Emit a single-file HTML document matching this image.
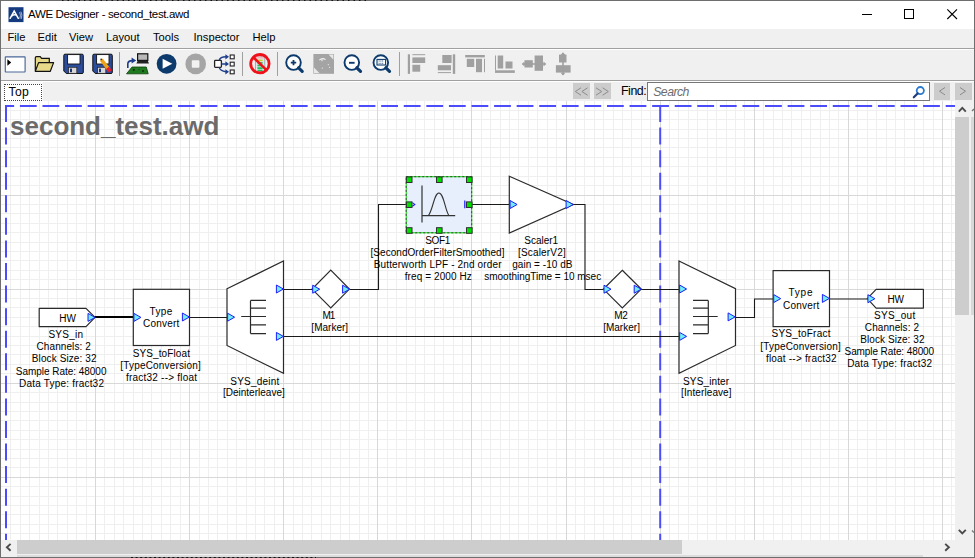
<!DOCTYPE html>
<html><head><meta charset="utf-8">
<style>
*{margin:0;padding:0;box-sizing:border-box}
html,body{width:975px;height:558px;overflow:hidden;background:#f0f0f0}
body{position:relative;font-family:"Liberation Sans",sans-serif;color:#000}
.a{position:absolute}
.t{position:absolute;white-space:nowrap;line-height:1}
.m{position:absolute;white-space:nowrap;line-height:1;top:32px;font-size:11.2px}
.sep{position:absolute;top:52px;width:1px;height:24px;background:#a0a0a0}
</style></head><body>
<!-- title bar -->
<div class="a" style="left:1px;top:1px;width:973px;height:28px;background:#fff"></div>
<svg class="a" style="left:8px;top:6.5px" width="16" height="16" viewBox="0 0 16 16">
<rect x="0.5" y="0.2" width="15" height="14.9" fill="#143a80"/>
<path d="M2.1 11.3L6.2 4.1L10.3 11.3M3.5 9.2Q5 7.6 7.6 7.9" stroke="#fff" stroke-width="1.5" fill="none" stroke-linecap="round"/>
<path d="M11.6 5.2Q13.2 8 11.8 11.6M12.9 4.6Q14.8 8 13.1 12" stroke="#b8c0d8" stroke-width="0.9" fill="none"/>
</svg>
<div class="t" style="left:28px;top:9px;font-size:11.5px;letter-spacing:-0.35px">AWE Designer - second_test.awd</div>
<div class="a" style="left:862px;top:14px;width:10px;height:1px;background:#000"></div>
<div class="a" style="left:904px;top:9px;width:10px;height:10px;border:1px solid #000"></div>
<svg class="a" style="left:946px;top:8px" width="12" height="12" viewBox="0 0 12 12"><path d="M1.3 1.3 L11 11 M11 1.3 L1.3 11" stroke="#000" stroke-width="1.1"/></svg>

<!-- menu -->
<div class="m" style="left:7.5px">File</div>
<div class="m" style="left:37.5px">Edit</div>
<div class="m" style="left:69px">View</div>
<div class="m" style="left:106px">Layout</div>
<div class="m" style="left:153px">Tools</div>
<div class="m" style="left:193.5px">Inspector</div>
<div class="m" style="left:252.5px">Help</div>
<div class="a" style="left:1px;top:48px;width:973px;height:1px;background:#a0a0a0"></div>
<div class="a" style="left:1px;top:49px;width:973px;height:1px;background:#fff"></div>

<!-- toolbar -->
<svg class="a" style="left:0;top:49px" width="600" height="31" viewBox="0 49 600 31">
<!-- console -->
<rect x="5.3" y="56.8" width="19.8" height="15.2" rx="0.4" fill="#fff" stroke="#4a6698" stroke-width="1.15"/>
<path d="M7.4 59.2L11.2 62.5L7.4 65.8Z" fill="#000"/>
<!-- folder -->
<path d="M35.3 70.8V57.8Q35.3 56.6 36.5 56.6H40.2L41.6 58.3H49.3V62.3" fill="#e6d889" stroke="#111" stroke-width="1.2"/>
<path d="M35.3 71.3L38.6 62.6H53.6L50.3 71.3Z" fill="#e6d98a" stroke="#111" stroke-width="1.2" stroke-linejoin="round"/>
<!-- save -->
<path d="M63.8 55.4Q63.8 54.2 65 54.2H82.1Q83.3 54.2 83.3 55.4V72.3Q83.3 73.5 82.1 73.5H66.3L63.8 71Z" fill="#2c4d9c" stroke="#111" stroke-width="1"/>
<rect x="67.6" y="54.6" width="12.4" height="9.4" fill="#fff" stroke="#111" stroke-width="0.9"/>
<rect x="68.6" y="67.3" width="8.2" height="6" fill="#d8d8d8" stroke="#222" stroke-width="0.7"/>
<rect x="70" y="68.6" width="2" height="3.6" fill="#1c3370"/>
<!-- save as -->
<path d="M92.8 55.4Q92.8 54.2 94 54.2H111.1Q112.3 54.2 112.3 55.4V72.3Q112.3 73.5 111.1 73.5H95.3L92.8 71Z" fill="#2c4d9c" stroke="#111" stroke-width="1"/>
<rect x="96.6" y="54.6" width="12.4" height="9.4" fill="#fff" stroke="#111" stroke-width="0.9"/>
<rect x="97.6" y="67.3" width="8.2" height="6" fill="#d8d8d8" stroke="#222" stroke-width="0.7"/>
<rect x="99" y="68.6" width="2" height="3.6" fill="#1c3370"/>
<path d="M101.3 59.6L108.8 69.4" stroke="#eea21a" stroke-width="3.6" stroke-linecap="butt"/>
<path d="M107.6 67.8L110.3 71.4" stroke="#ee1c2a" stroke-width="3.6"/>
<circle cx="101.2" cy="59.3" r="0.9" fill="#333"/>
<!-- sep -->
<rect x="119" y="52" width="1" height="24" fill="#a0a0a0"/>
<!-- board -->
<path d="M126.5 73.8L132 67H146.3L148.2 73.8Z" fill="#1f7a1f" stroke="#0b3d0b" stroke-width="0.8"/>
<circle cx="133.8" cy="69.8" r="1.1" fill="#0a2a0a"/><circle cx="143" cy="71" r="0.9" fill="#0a2a0a"/><circle cx="139" cy="69.3" r="0.5" fill="#0a2a0a"/>
<rect x="137.6" y="53.8" width="10.2" height="6.6" fill="#b8b8b8" stroke="#111" stroke-width="1.2"/>
<path d="M136.4 63.6L137.8 60.4H147.6L149 63.6Z" fill="#222"/>
<path d="M127.8 68V64Q127.8 60.6 132.5 60.6" stroke="#1b3c8c" stroke-width="1.6" fill="none"/>
<path d="M131.6 57.6L136.2 60.6L131.6 63.6Z" fill="#1b3c8c"/>
<!-- play -->
<circle cx="166.6" cy="63.8" r="9.9" fill="#0c3a6c"/>
<path d="M162.6 58.8L172.3 63.8L162.6 68.8Z" fill="#fff"/>
<!-- stop -->
<circle cx="195.7" cy="63.9" r="10.3" fill="#a5a5a5"/>
<rect x="191.8" y="60.2" width="7.6" height="7.6" rx="0.8" fill="#f2f2f2"/>
<!-- tree -->
<rect x="214.6" y="60.4" width="6.8" height="7" rx="0.8" fill="#fff" stroke="#222" stroke-width="1.3"/>
<path d="M221.4 63.9H226.4M219.2 60.4Q220.2 56.9 226 56.8M219.2 67.4Q220.2 70.9 226 71.8" stroke="#1f3f8f" stroke-width="1.5" fill="none"/>
<path d="M225.4 54.2L229 56.8L225.4 59.4ZM225.4 61.3L229 63.9L225.4 66.5ZM225.4 69.2L229 71.8L225.4 74.4Z" fill="#1f3f8f"/>
<rect x="230.2" y="55" width="4" height="3.8" fill="#fff" stroke="#222" stroke-width="1.1"/>
<rect x="230.2" y="62.2" width="4" height="3.8" fill="#fff" stroke="#222" stroke-width="1.1"/>
<rect x="230.2" y="70" width="4" height="3.8" fill="#fff" stroke="#222" stroke-width="1.1"/>
<rect x="242" y="52" width="1" height="24" fill="#a0a0a0"/>
<!-- no battery -->
<rect x="255.4" y="56.8" width="9.4" height="14.6" fill="#e4e8ec" stroke="#9aa0a8" stroke-width="0.9"/>
<rect x="256.2" y="56.6" width="7.8" height="2" fill="#f4b8c0"/>
<rect x="257.4" y="59.6" width="5.2" height="1.6" fill="#c8d020"/>
<rect x="257.4" y="62" width="5.2" height="1.8" fill="#20c060"/><rect x="257.4" y="64.6" width="5.2" height="1.8" fill="#20c060"/><rect x="257.4" y="67.2" width="5.2" height="1.8" fill="#20c060"/><rect x="257.4" y="69.6" width="5.2" height="1.4" fill="#20c060"/>
<circle cx="259.9" cy="63.7" r="9.2" fill="none" stroke="#f01018" stroke-width="2.8"/>
<path d="M253.3 57.3L266.5 70.1" stroke="#f01018" stroke-width="2.6"/>
<rect x="277" y="52" width="1" height="24" fill="#a0a0a0"/>
<!-- zoom in -->
<circle cx="293.5" cy="62.6" r="7.3" fill="#fff" stroke="#0c3a6c" stroke-width="1.9"/>
<path d="M298.6 67.8L302.2 71.3" stroke="#0c3a6c" stroke-width="3.2" stroke-linecap="round"/>
<path d="M293.5 59.9V65.3M290.8 62.6H296.2" stroke="#0c3a6c" stroke-width="1.8"/>
<!-- fit gray -->
<rect x="313.4" y="54" width="20.6" height="19.8" fill="#a4a4a4"/>
<path d="M328.6 54.6H333.4V59.8Z" fill="#e8e8e8"/>
<path d="M314 67.4V73.2H319.6Z" fill="#e8e8e8"/>
<path d="M319.4 60.2Q322 57.4 325.6 59.6M322 59V61.3" stroke="#f0f0f0" stroke-width="1.1" fill="none"/>
<circle cx="328.3" cy="64.6" r="0.6" fill="#eee"/><circle cx="329.6" cy="67.3" r="0.6" fill="#eee"/><circle cx="322.3" cy="68.1" r="0.6" fill="#eee"/>
<!-- zoom out -->
<circle cx="351.8" cy="62.6" r="7.3" fill="#fff" stroke="#0c3a6c" stroke-width="1.9"/>
<path d="M356.9 67.8L360.5 71.3" stroke="#0c3a6c" stroke-width="3.2" stroke-linecap="round"/>
<path d="M349 62.8H354.6" stroke="#0c3a6c" stroke-width="1.9"/>
<!-- zoom fit -->
<circle cx="380.8" cy="62.6" r="7.3" fill="#fff" stroke="#0c3a6c" stroke-width="1.9"/>
<path d="M385.9 67.8L389.5 71.3" stroke="#0c3a6c" stroke-width="3.2" stroke-linecap="round"/>
<rect x="377" y="59.4" width="8.6" height="5.6" fill="#fff" stroke="#0c3a6c" stroke-width="1.1"/>
<path d="M378.6 61H384M378.6 63.3H384" stroke="#0c3a6c" stroke-width="0.9" stroke-dasharray="1 0.8"/>
<rect x="399" y="52" width="1" height="24" fill="#a0a0a0"/>
<!-- align left -->
<g fill="#a0a0a0">
<rect x="407.8" y="54.3" width="2.2" height="19.6"/>
<rect x="412.4" y="57.4" width="12.8" height="5.6"/>
<rect x="412.4" y="64.8" width="7.8" height="6.9"/>
<rect x="412.4" y="54.2" width="12.8" height="1"/>
<!-- align right -->
<rect x="452.8" y="54.3" width="2.4" height="19.6"/>
<rect x="442.3" y="55" width="9.3" height="8"/>
<rect x="437.8" y="65.2" width="13.2" height="5.1"/>
<rect x="437.8" y="72.1" width="13.2" height="1"/>
<!-- align top -->
<rect x="465.2" y="55" width="19.6" height="2.4"/>
<rect x="466.8" y="58.8" width="7.4" height="8.2"/>
<rect x="476" y="58.8" width="6" height="13.4"/>
<rect x="484" y="58.8" width="1" height="13.4"/>
<!-- align bottom -->
<rect x="495" y="55.5" width="1" height="14.8"/>
<rect x="497.7" y="55.5" width="5.5" height="13"/>
<rect x="505.5" y="61.5" width="7" height="7"/>
<rect x="495" y="70.3" width="19.8" height="2.6"/>
<!-- center h -->
<rect x="524.5" y="60.2" width="8.3" height="7.3"/>
<rect x="534.6" y="55.5" width="8.4" height="15.3"/>
<rect x="522.5" y="63.2" width="23" height="1.6"/>
<path d="M521.8 64L524.5 61.4V66.6ZM546.2 64L543.5 61.4V66.6Z"/>
<!-- center v -->
<rect x="559" y="54.6" width="7.5" height="7.9"/>
<rect x="555.9" y="65.2" width="14.7" height="7.4"/>
<rect x="562.2" y="53" width="1.6" height="22"/>
<path d="M563 52.2L560.6 55H565.4ZM563 75.6L560.6 72.8H565.4Z"/>
</g>
</svg>


<div class="a" style="left:1px;top:80px;width:973px;height:1px;background:#a0a0a0"></div>
<div class="a" style="left:1px;top:81px;width:973px;height:1px;background:#fff"></div>

<!-- tab bar -->
<div class="a" style="left:1px;top:82px;width:42px;height:19px;background:#fafafa"></div>
<div class="a" style="left:4px;top:84px;width:38px;height:17px;background:#fff;border:1px dotted #444"></div>
<div class="t" style="left:8.6px;top:85.6px;font-size:12.2px;letter-spacing:0.3px">Top</div>
<div class="a" style="left:573px;top:83px;width:17px;height:16px;background:#cccccc"></div>
<div class="a" style="left:594px;top:83px;width:17px;height:16px;background:#cccccc"></div>
<div class="t" style="left:621px;top:85px;font-size:12.4px;letter-spacing:-0.45px">Find:</div>
<div class="a" style="left:647px;top:82px;width:283px;height:19px;background:#fff;border:1px solid #777"></div>
<div class="t" style="left:653.2px;top:86.1px;font-size:12.3px;letter-spacing:-0.55px;font-style:italic;color:#6d6d6d">Search</div>
<svg class="a" style="left:910px;top:84px" width="16" height="16" viewBox="910 84 16 16">
<circle cx="920.3" cy="90.6" r="3.6" fill="none" stroke="#2a7ad0" stroke-width="1.8"/>
<path d="M917.6 93.4L913.8 97.3" stroke="#1d3f7a" stroke-width="2.2" stroke-linecap="round"/>
</svg>
<div class="a" style="left:934px;top:83px;width:16px;height:16.5px;background:#cccccc"></div>
<div class="a" style="left:954.5px;top:83px;width:17px;height:16.5px;background:#cccccc"></div>
<svg class="a" style="left:934px;top:83px" width="40" height="17" viewBox="934 83 40 17">
<path d="M945 87.5L939.5 91.2L945 94.9" stroke="#8a8a8a" stroke-width="1" fill="none"/>
<path d="M960 87.5L965.5 91.2L960 94.9" stroke="#8a8a8a" stroke-width="1" fill="none"/>
</svg>
<svg class="a" style="left:570px;top:82px" width="45" height="18" viewBox="570 82 45 18">
<path d="M581 87.8L575.3 91.5L581 95.2M587.6 87.8L581.9 91.5L587.6 95.2M596 87.8L601.7 91.5L596 95.2M602.6 87.8L608.3 91.5L602.6 95.2" stroke="#8c8c8c" stroke-width="1" fill="none"/>
</svg>


<!-- canvas -->
<svg class="a" style="left:1px;top:101px" width="954" height="439" viewBox="1 101 954 439" font-family="Liberation Sans, sans-serif" fill="#000"><rect x="1" y="101" width="954" height="439" fill="#fff"/>
<path d="M10.5 101V540M20.5 101V540M29.5 101V540M39.5 101V540M48.5 101V540M57.5 101V540M67.5 101V540M76.5 101V540M86.5 101V540M104.5 101V540M114.5 101V540M123.5 101V540M133.5 101V540M142.5 101V540M151.5 101V540M161.5 101V540M170.5 101V540M180.5 101V540M199.5 101V540M208.5 101V540M217.5 101V540M227.5 101V540M236.5 101V540M246.5 101V540M255.5 101V540M264.5 101V540M274.5 101V540M293.5 101V540M302.5 101V540M311.5 101V540M321.5 101V540M330.5 101V540M340.5 101V540M349.5 101V540M359.5 101V540M368.5 101V540M387.5 101V540M396.5 101V540M406.5 101V540M415.5 101V540M424.5 101V540M434.5 101V540M443.5 101V540M453.5 101V540M462.5 101V540M481.5 101V540M490.5 101V540M500.5 101V540M509.5 101V540M518.5 101V540M528.5 101V540M537.5 101V540M547.5 101V540M556.5 101V540M575.5 101V540M584.5 101V540M594.5 101V540M603.5 101V540M613.5 101V540M622.5 101V540M631.5 101V540M641.5 101V540M650.5 101V540M669.5 101V540M678.5 101V540M688.5 101V540M697.5 101V540M707.5 101V540M716.5 101V540M726.5 101V540M735.5 101V540M744.5 101V540M763.5 101V540M773.5 101V540M782.5 101V540M791.5 101V540M801.5 101V540M810.5 101V540M820.5 101V540M829.5 101V540M838.5 101V540M857.5 101V540M867.5 101V540M876.5 101V540M886.5 101V540M895.5 101V540M904.5 101V540M914.5 101V540M923.5 101V540M933.5 101V540M951.5 101V540M1 110.5H955M1 119.5H955M1 129.5H955M1 138.5H955M1 147.5H955M1 157.5H955M1 166.5H955M1 176.5H955M1 185.5H955M1 204.5H955M1 213.5H955M1 223.5H955M1 232.5H955M1 242.5H955M1 251.5H955M1 260.5H955M1 270.5H955M1 279.5H955M1 298.5H955M1 307.5H955M1 317.5H955M1 326.5H955M1 336.5H955M1 345.5H955M1 354.5H955M1 364.5H955M1 373.5H955M1 392.5H955M1 402.5H955M1 411.5H955M1 420.5H955M1 430.5H955M1 439.5H955M1 449.5H955M1 458.5H955M1 467.5H955M1 486.5H955M1 496.5H955M1 505.5H955M1 514.5H955M1 524.5H955M1 533.5H955" stroke="#efefef" stroke-width="1" fill="none"/><path d="M95.5 101V540M189.5 101V540M283.5 101V540M377.5 101V540M471.5 101V540M566.5 101V540M660.5 101V540M754.5 101V540M848.5 101V540M942.5 101V540M1 195.5H955M1 289.5H955M1 383.5H955M1 477.5H955" stroke="#d8d8d8" stroke-width="1" fill="none"/>
<path d="M5 106H955" stroke="#4c4cfa" stroke-width="2" stroke-dasharray="16.8 5.78" stroke-dashoffset="7.68" fill="none"/>
<path d="M6 105V540" stroke="#4c4cfa" stroke-width="2" stroke-dasharray="17 5.57" fill="none"/>
<path d="M660.2 105V540" stroke="#4c4cfa" stroke-width="2" stroke-dasharray="17 5.57" fill="none"/>
<text x="10.1" y="134.6" font-size="26" font-weight="bold" fill="#6b6b6b" textLength="209.2" lengthAdjust="spacing">second_test.awd</text>
<path d="M95 317H133" stroke="#000" stroke-width="2" fill="none"/>
<path d="M189.5 317.5H227M283.5 289.5H312M349.5 289.5H378.5V204.5H406M472 204.5H509.5M573.5 204.5H585V289.5H603.5M641 289.5H679M283.5 336.5H679M735.5 317.5H754.5V299H773M829.5 299H867.5" stroke="#1a1a1a" stroke-width="1.1" fill="none"/>
<path d="M39.2 308.3H86L95 317.3L86 326.7H39.2Z" stroke="#2a2a2a" stroke-width="1.2" fill="#fff" stroke-linejoin="round"/>
<path d="M88.0 313.4 L95.0 317.4 L88.0 321.4 Z" fill="#70eef2" stroke="#1c1cff" stroke-width="1" stroke-linejoin="miter"/>
<text x="67.70" y="321.5" font-size="10" text-anchor="middle" textLength="16.70" lengthAdjust="spacing">HW</text>
<text x="65.70" y="337.5" font-size="10" text-anchor="middle" textLength="34.50" lengthAdjust="spacing">SYS_in</text>
<text x="63.65" y="349.5" font-size="10" text-anchor="middle" textLength="54.20" lengthAdjust="spacing">Channels: 2</text>
<text x="64.15" y="362" font-size="10" text-anchor="middle" textLength="64.60" lengthAdjust="spacing">Block Size: 32</text>
<text x="61.15" y="374.6" font-size="10" text-anchor="middle" textLength="90.60" lengthAdjust="spacing">Sample Rate: 48000</text>
<text x="61.45" y="386.5" font-size="10" text-anchor="middle" textLength="85.00" lengthAdjust="spacing">Data Type: fract32</text>
<rect x="133.3" y="289.3" width="56.2" height="56.2" stroke="#2a2a2a" stroke-width="1.2" fill="#fff"/>
<path d="M133.9 313.4 L140.9 317.4 L133.9 321.4 Z" fill="#70eef2" stroke="#1c1cff" stroke-width="1" stroke-linejoin="miter"/>
<path d="M182.4 313.0 L189.4 317.0 L182.4 321.0 Z" fill="#70eef2" stroke="#1c1cff" stroke-width="1" stroke-linejoin="miter"/>
<text x="160.85" y="315.4" font-size="10" text-anchor="middle" textLength="22.80" lengthAdjust="spacing">Type</text>
<text x="161.15" y="327.2" font-size="10" text-anchor="middle" textLength="36.40" lengthAdjust="spacing">Convert</text>
<text x="161.30" y="356.6" font-size="10" text-anchor="middle" textLength="57.30" lengthAdjust="spacing">SYS_toFloat</text>
<text x="160.55" y="368.7" font-size="10" text-anchor="middle" textLength="80.40" lengthAdjust="spacing">[TypeConversion]</text>
<text x="161.55" y="380.5" font-size="10" text-anchor="middle" textLength="71.20" lengthAdjust="spacing">fract32 --&gt; float</text>
<path d="M227 288.7L283.5 261V373.4L227 345.5Z" stroke="#2a2a2a" stroke-width="1.2" fill="#fff"/>
<path d="M241.2 316.5H266M250.5 300.4V333.6M250.5 300.4H266M250.5 308.2H266M250.5 324.8H266M250.5 333.6H266" stroke="#2a2a2a" stroke-width="1.2" fill="none"/>
<path d="M227.6 313.2 L234.6 317.2 L227.6 321.2 Z" fill="#70eef2" stroke="#1c1cff" stroke-width="1" stroke-linejoin="miter"/>
<path d="M276.40000000000003 285 L283.40000000000003 289 L276.40000000000003 293 Z" fill="#70eef2" stroke="#1c1cff" stroke-width="1" stroke-linejoin="miter"/>
<path d="M276.40000000000003 332.4 L283.40000000000003 336.4 L276.40000000000003 340.4 Z" fill="#70eef2" stroke="#1c1cff" stroke-width="1" stroke-linejoin="miter"/>
<text x="254.80" y="384.8" font-size="10" text-anchor="middle" textLength="48.90" lengthAdjust="spacing">SYS_deint</text>
<text x="253.85" y="396.3" font-size="10" text-anchor="middle" textLength="61.80" lengthAdjust="spacing">[Deinterleave]</text>
<path d="M330.8 270.2L349.4 289.1L330.8 308L312.1 289.1Z" stroke="#2a2a2a" stroke-width="1.2" fill="#fff"/>
<path d="M312.70000000000005 285.2 L319.70000000000005 289.2 L312.70000000000005 293.2 Z" fill="#70eef2" stroke="#1c1cff" stroke-width="1" stroke-linejoin="miter"/>
<path d="M342.6 285.2 L349.6 289.2 L342.6 293.2 Z" fill="#70eef2" stroke="#1c1cff" stroke-width="1" stroke-linejoin="miter"/>
<text x="328.90" y="318.7" font-size="10" text-anchor="middle" textLength="12.70" lengthAdjust="spacing">M1</text>
<text x="329.75" y="331.2" font-size="10" text-anchor="middle" textLength="36.80" lengthAdjust="spacing">[Marker]</text>
<rect x="406.2" y="176.7" width="65.5" height="56.1" fill="#e6effb" stroke="#00e000" stroke-width="1"/>
<rect x="406.2" y="176.7" width="65.5" height="56.1" fill="none" stroke="#404040" stroke-width="1" stroke-dasharray="2 2"/>
<path d="M422 185.6V222.6M422 215.7H455.2" stroke="#333" stroke-width="1.2" fill="none"/>
<path d="M428.3 215.7C433 210 434 193 438.9 193C443.8 193 445 210 449 215.7" stroke="#333" stroke-width="1.1" fill="none"/>
<path d="M412.4 202.6L414.8 204.4L412.4 206.2" stroke="#1a1aff" stroke-width="1.1" fill="none"/>
<path d="M464.8 200.5V208.3" stroke="#1a1aff" stroke-width="1.2" fill="none"/>
<rect x="406.4" y="176.9" width="5.6" height="5.6" fill="#00e000" stroke="#303030" stroke-width="1"/>
<rect x="406.4" y="227.7" width="5.6" height="5.6" fill="#00e000" stroke="#303030" stroke-width="1"/>
<rect x="436.5" y="176.9" width="5.6" height="5.6" fill="#00e000" stroke="#303030" stroke-width="1"/>
<rect x="436.5" y="227.7" width="5.6" height="5.6" fill="#00e000" stroke="#303030" stroke-width="1"/>
<rect x="466.5" y="176.9" width="5.6" height="5.6" fill="#00e000" stroke="#303030" stroke-width="1"/>
<rect x="466.5" y="227.7" width="5.6" height="5.6" fill="#00e000" stroke="#303030" stroke-width="1"/>
<rect x="406.4" y="201.9" width="5.6" height="5.6" fill="#00e000" stroke="#303030" stroke-width="1"/>
<rect x="466.5" y="201.9" width="5.6" height="5.6" fill="#00e000" stroke="#303030" stroke-width="1"/>
<text x="437.75" y="243.6" font-size="10" text-anchor="middle" textLength="25.00" lengthAdjust="spacing">SOF1</text>
<text x="437.50" y="256.3" font-size="10" text-anchor="middle" textLength="133.90" lengthAdjust="spacing">[SecondOrderFilterSmoothed]</text>
<text x="437.65" y="267.9" font-size="10" text-anchor="middle" textLength="127.80" lengthAdjust="spacing">Butterworth LPF - 2nd order</text>
<text x="438.25" y="280.3" font-size="10" text-anchor="middle" textLength="67.00" lengthAdjust="spacing">freq = 2000 Hz</text>
<path d="M509.3 176.2L573.3 204.5L509.3 233Z" stroke="#2a2a2a" stroke-width="1.2" fill="#fff"/>
<path d="M510.1 200.5 L517.1 204.5 L510.1 208.5 Z" fill="#70eef2" stroke="#1c1cff" stroke-width="1" stroke-linejoin="miter"/>
<path d="M566.1 200.5 L573.1 204.5 L566.1 208.5 Z" fill="#70eef2" stroke="#1c1cff" stroke-width="1" stroke-linejoin="miter"/>
<text x="541.15" y="243.7" font-size="10" text-anchor="middle" textLength="33.80" lengthAdjust="spacing">Scaler1</text>
<text x="541.85" y="256" font-size="10" text-anchor="middle" textLength="47.80" lengthAdjust="spacing">[ScalerV2]</text>
<text x="542.35" y="268.2" font-size="10" text-anchor="middle" textLength="60.20" lengthAdjust="spacing">gain = -10 dB</text>
<text x="542.70" y="279.8" font-size="10" text-anchor="middle" textLength="116.90" lengthAdjust="spacing">smoothingTime = 10 msec</text>
<path d="M622.3 270.3L641.2 289.1L622.3 307.9L603.4 289.1Z" stroke="#2a2a2a" stroke-width="1.2" fill="#fff"/>
<path d="M604.0 285.2 L611.0 289.2 L604.0 293.2 Z" fill="#70eef2" stroke="#1c1cff" stroke-width="1" stroke-linejoin="miter"/>
<path d="M634.2 285.2 L641.2 289.2 L634.2 293.2 Z" fill="#70eef2" stroke="#1c1cff" stroke-width="1" stroke-linejoin="miter"/>
<text x="621.05" y="318.7" font-size="10" text-anchor="middle" textLength="13.40" lengthAdjust="spacing">M2</text>
<text x="621.55" y="331.2" font-size="10" text-anchor="middle" textLength="36.80" lengthAdjust="spacing">[Marker]</text>
<path d="M679 261L735.5 288.7V345.5L679 373.4Z" stroke="#2a2a2a" stroke-width="1.2" fill="#fff"/>
<path d="M693 316.5H717.7M708.3 300.4V333.6M693 300.4H708.3M693 308.2H708.3M693 324.8H708.3M693 333.6H708.3" stroke="#2a2a2a" stroke-width="1.2" fill="none"/>
<path d="M679.6 285 L686.6 289 L679.6 293 Z" fill="#70eef2" stroke="#1c1cff" stroke-width="1" stroke-linejoin="miter"/>
<path d="M679.6 332.4 L686.6 336.4 L679.6 340.4 Z" fill="#70eef2" stroke="#1c1cff" stroke-width="1" stroke-linejoin="miter"/>
<path d="M728.1 312.9 L735.1 316.9 L728.1 320.9 Z" fill="#70eef2" stroke="#1c1cff" stroke-width="1" stroke-linejoin="miter"/>
<text x="706.10" y="384.8" font-size="10" text-anchor="middle" textLength="46.10" lengthAdjust="spacing">SYS_inter</text>
<text x="706.30" y="396.25" font-size="10" text-anchor="middle" textLength="50.50" lengthAdjust="spacing">[Interleave]</text>
<rect x="773.1" y="270.6" width="56.4" height="56" stroke="#2a2a2a" stroke-width="1.2" fill="#fff"/>
<path d="M773.7 294.6 L780.7 298.6 L773.7 302.6 Z" fill="#70eef2" stroke="#1c1cff" stroke-width="1" stroke-linejoin="miter"/>
<path d="M822.4 294.4 L829.4 298.4 L822.4 302.4 Z" fill="#70eef2" stroke="#1c1cff" stroke-width="1" stroke-linejoin="miter"/>
<text x="800.50" y="296.1" font-size="10" text-anchor="middle" textLength="23.90" lengthAdjust="spacing">Type</text>
<text x="801.20" y="308.6" font-size="10" text-anchor="middle" textLength="36.30" lengthAdjust="spacing">Convert</text>
<text x="801.00" y="337.4" font-size="10" text-anchor="middle" textLength="58.90" lengthAdjust="spacing">SYS_toFract</text>
<text x="800.55" y="349.7" font-size="10" text-anchor="middle" textLength="80.40" lengthAdjust="spacing">[TypeConversion]</text>
<text x="801.30" y="361.5" font-size="10" text-anchor="middle" textLength="70.70" lengthAdjust="spacing">float --&gt; fract32</text>
<path d="M867.3 298.7L876.1 289.4H923.4V308.1H876.1Z" stroke="#2a2a2a" stroke-width="1.2" fill="#fff" stroke-linejoin="round"/>
<path d="M867.9 294.7 L874.9 298.7 L867.9 302.7 Z" fill="#70eef2" stroke="#1c1cff" stroke-width="1" stroke-linejoin="miter"/>
<text x="895.70" y="302.7" font-size="10" text-anchor="middle" textLength="16.50" lengthAdjust="spacing">HW</text>
<text x="894.65" y="318.5" font-size="10" text-anchor="middle" textLength="41.20" lengthAdjust="spacing">SYS_out</text>
<text x="891.90" y="330.6" font-size="10" text-anchor="middle" textLength="54.10" lengthAdjust="spacing">Channels: 2</text>
<text x="892.40" y="343" font-size="10" text-anchor="middle" textLength="64.10" lengthAdjust="spacing">Block Size: 32</text>
<text x="889.35" y="355.2" font-size="10" text-anchor="middle" textLength="89.60" lengthAdjust="spacing">Sample Rate: 48000</text>
<text x="889.55" y="367.3" font-size="10" text-anchor="middle" textLength="84.80" lengthAdjust="spacing">Data Type: fract32</text></svg>

<!-- scrollbars -->
<!-- vertical scrollbar -->
<div class="a" style="left:955px;top:101px;width:19px;height:456px;background:#f0f0f0"></div>
<div class="a" style="left:955px;top:116.5px;width:14px;height:198.5px;background:#cdcdcd"></div>
<div class="a" style="left:971px;top:116.5px;width:3px;height:198.5px;background:#d8d8d8"></div>
<svg class="a" style="left:955px;top:101px" width="19" height="456" viewBox="955 101 19 456">
<path d="M958.8 111.6L962.3 107.9L965.8 111.6" stroke="#4a4a4a" stroke-width="1.9" fill="none"/>
<path d="M958.8 529.8L962.3 533.3L965.8 529.8" stroke="#4a4a4a" stroke-width="1.9" fill="none"/>
<path d="M972 111L974 109" stroke="#777" stroke-width="1.4" fill="none"/>
<path d="M972 530.5L974 532.5" stroke="#777" stroke-width="1.4" fill="none"/>
</svg>
<!-- horizontal scrollbar -->
<div class="a" style="left:1px;top:540px;width:954px;height:17px;background:#f0f0f0"></div>
<div class="a" style="left:17px;top:540px;width:665px;height:13.7px;background:#cdcdcd"></div>
<div class="a" style="left:17px;top:554.5px;width:906px;height:2.5px;background:#dcdcdc"></div>
<svg class="a" style="left:1px;top:540px" width="954" height="17" viewBox="1 540 954 17">
<path d="M10.6 543.9L6.9 547.3L10.6 550.7" stroke="#4a4a4a" stroke-width="1.9" fill="none"/>
<path d="M945.2 543.9L948.9 547.3L945.2 550.7" stroke="#4a4a4a" stroke-width="1.9" fill="none"/>
</svg>


<!-- window border -->
<div class="a" style="left:0;top:0;width:975px;height:1px;background:#6e6e6e"></div>
<div class="a" style="left:0;top:0;width:1px;height:558px;background:#6e6e6e"></div>
<div class="a" style="left:974px;top:0;width:1px;height:558px;background:#6e6e6e"></div>
<div class="a" style="left:0;top:557px;width:975px;height:1px;background:#6e6e6e"></div>
<svg class="a" style="left:0;top:0" width="975" height="558" viewBox="0 0 975 558">
<path d="M131 557.5H316" stroke="#111" stroke-width="1" stroke-dasharray="2 2.6"/>
<path d="M62 0.5H370" stroke="#111" stroke-width="1" stroke-dasharray="1.5 4"/>
</svg>
</body></html>
